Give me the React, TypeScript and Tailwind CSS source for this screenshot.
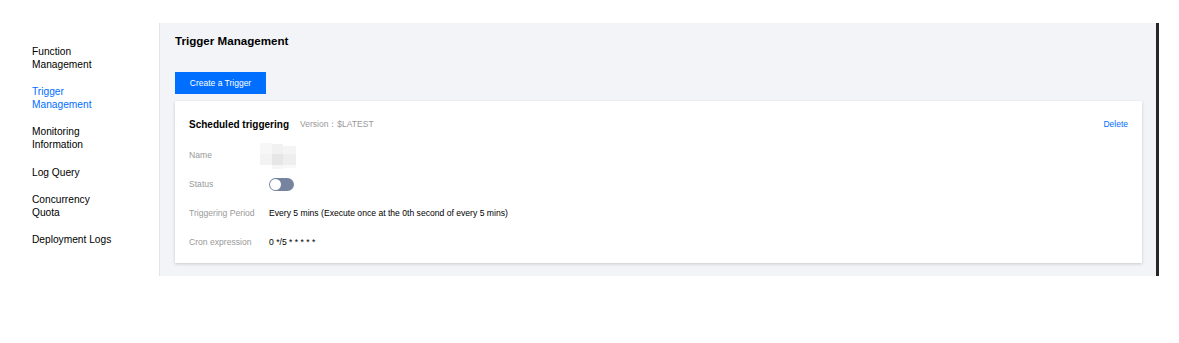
const navItems = [
  { label: "Function Management" },
  { label: "Trigger Management", active: true },
  { label: "Monitoring Information" },
  { label: "Log Query" },
  { label: "Concurrency Quota" },
  { label: "Deployment Logs" },
];

function BlurredName() {
  // pixelated / redacted name thumbnail
  return (
    <svg width="37" height="28" viewBox="0 0 37 28" className="block">
      <rect x="0" y="1" width="12" height="11" fill="#f7f7f7" />
      <rect x="12" y="2" width="11" height="10" fill="#f1f1f1" />
      <rect x="23" y="4" width="13" height="8" fill="#f4f4f4" />
      <rect x="0" y="12" width="12" height="11" fill="#f3f3f3" />
      <rect x="12" y="12" width="11" height="11" fill="#e6e6e6" />
      <rect x="23" y="12" width="13" height="11" fill="#eeeeee" />
      <rect x="12" y="23" width="11" height="4" fill="#f6f6f6" />
      <rect x="23" y="23" width="13" height="3" fill="#f8f8f8" />
    </svg>
  );
}

function Toggle() {
  return (
    <div className="w-[25px] h-[13px] rounded-full bg-[#76849f] flex items-center pl-[1px]">
      <div className="w-[11px] h-[11px] rounded-full bg-white" />
    </div>
  );
}

export default function App() {
  return (
    <div className="w-[1179px] h-[343px] bg-white font-['Liberation_Sans',Arial,sans-serif] pt-[23px]">
      <div className="flex h-[253px]">

        {/* ── Sidebar ─────────────────────────────── */}
        <div className="w-[160px] shrink-0 border-r border-[#e3e4e8] pl-[32px] pt-[22px] flex flex-col gap-[14.2px]">
          {navItems.map((item) => (
            <div
              key={item.label}
              className={`w-[82px] text-[10.2px] leading-[13px] ${item.active ? "text-[#006eff]" : "text-black"}`}
            >
              {item.label}
            </div>
          ))}
        </div>

        {/* ── Main ────────────────────────────────── */}
        <div className="w-[996px] shrink-0 bg-[#f3f4f8] pl-[15px] pr-[14px] pt-[10px]">
          <h1 className="text-[11.6px] leading-[16px] font-bold text-black">Trigger Management</h1>

          <button className="mt-[23px] h-[22px] w-[91px] bg-[#006eff] text-white text-[8.5px] flex items-center justify-center">
            Create a Trigger
          </button>

          <div className="mt-[7px] h-[162px] bg-white shadow-[0_1px_3px_rgba(0,0,0,0.18)] px-[14px] pt-[16px]">
            <div className="h-[14px] flex items-center">
              <span className="text-[10px] font-bold text-black">Scheduled triggering</span>
              <span className="ml-[11px] text-[8.5px] text-[#999]">Version：$LATEST</span>
              <span className="ml-auto text-[8.5px] text-[#006eff]">Delete</span>
            </div>

            <div className="mt-[10px] grid grid-cols-[80px_1fr] auto-rows-[29px] items-center text-[8.6px]">
              <span className="text-[#999]">Name</span>
              <div className="-ml-[9px]"><BlurredName /></div>

              <span className="text-[#999]">Status</span>
              <Toggle />

              <span className="text-[#999]">Triggering Period</span>
              <span className="text-black">Every 5 mins (Execute once at the 0th second of every 5 mins)</span>

              <span className="text-[#999]">Cron expression</span>
              <span className="text-black">0 */5 * * * * *</span>
            </div>
          </div>
        </div>

        <div className="w-[3px] shrink-0 bg-[#262626]" />
      </div>
    </div>
  );
}
